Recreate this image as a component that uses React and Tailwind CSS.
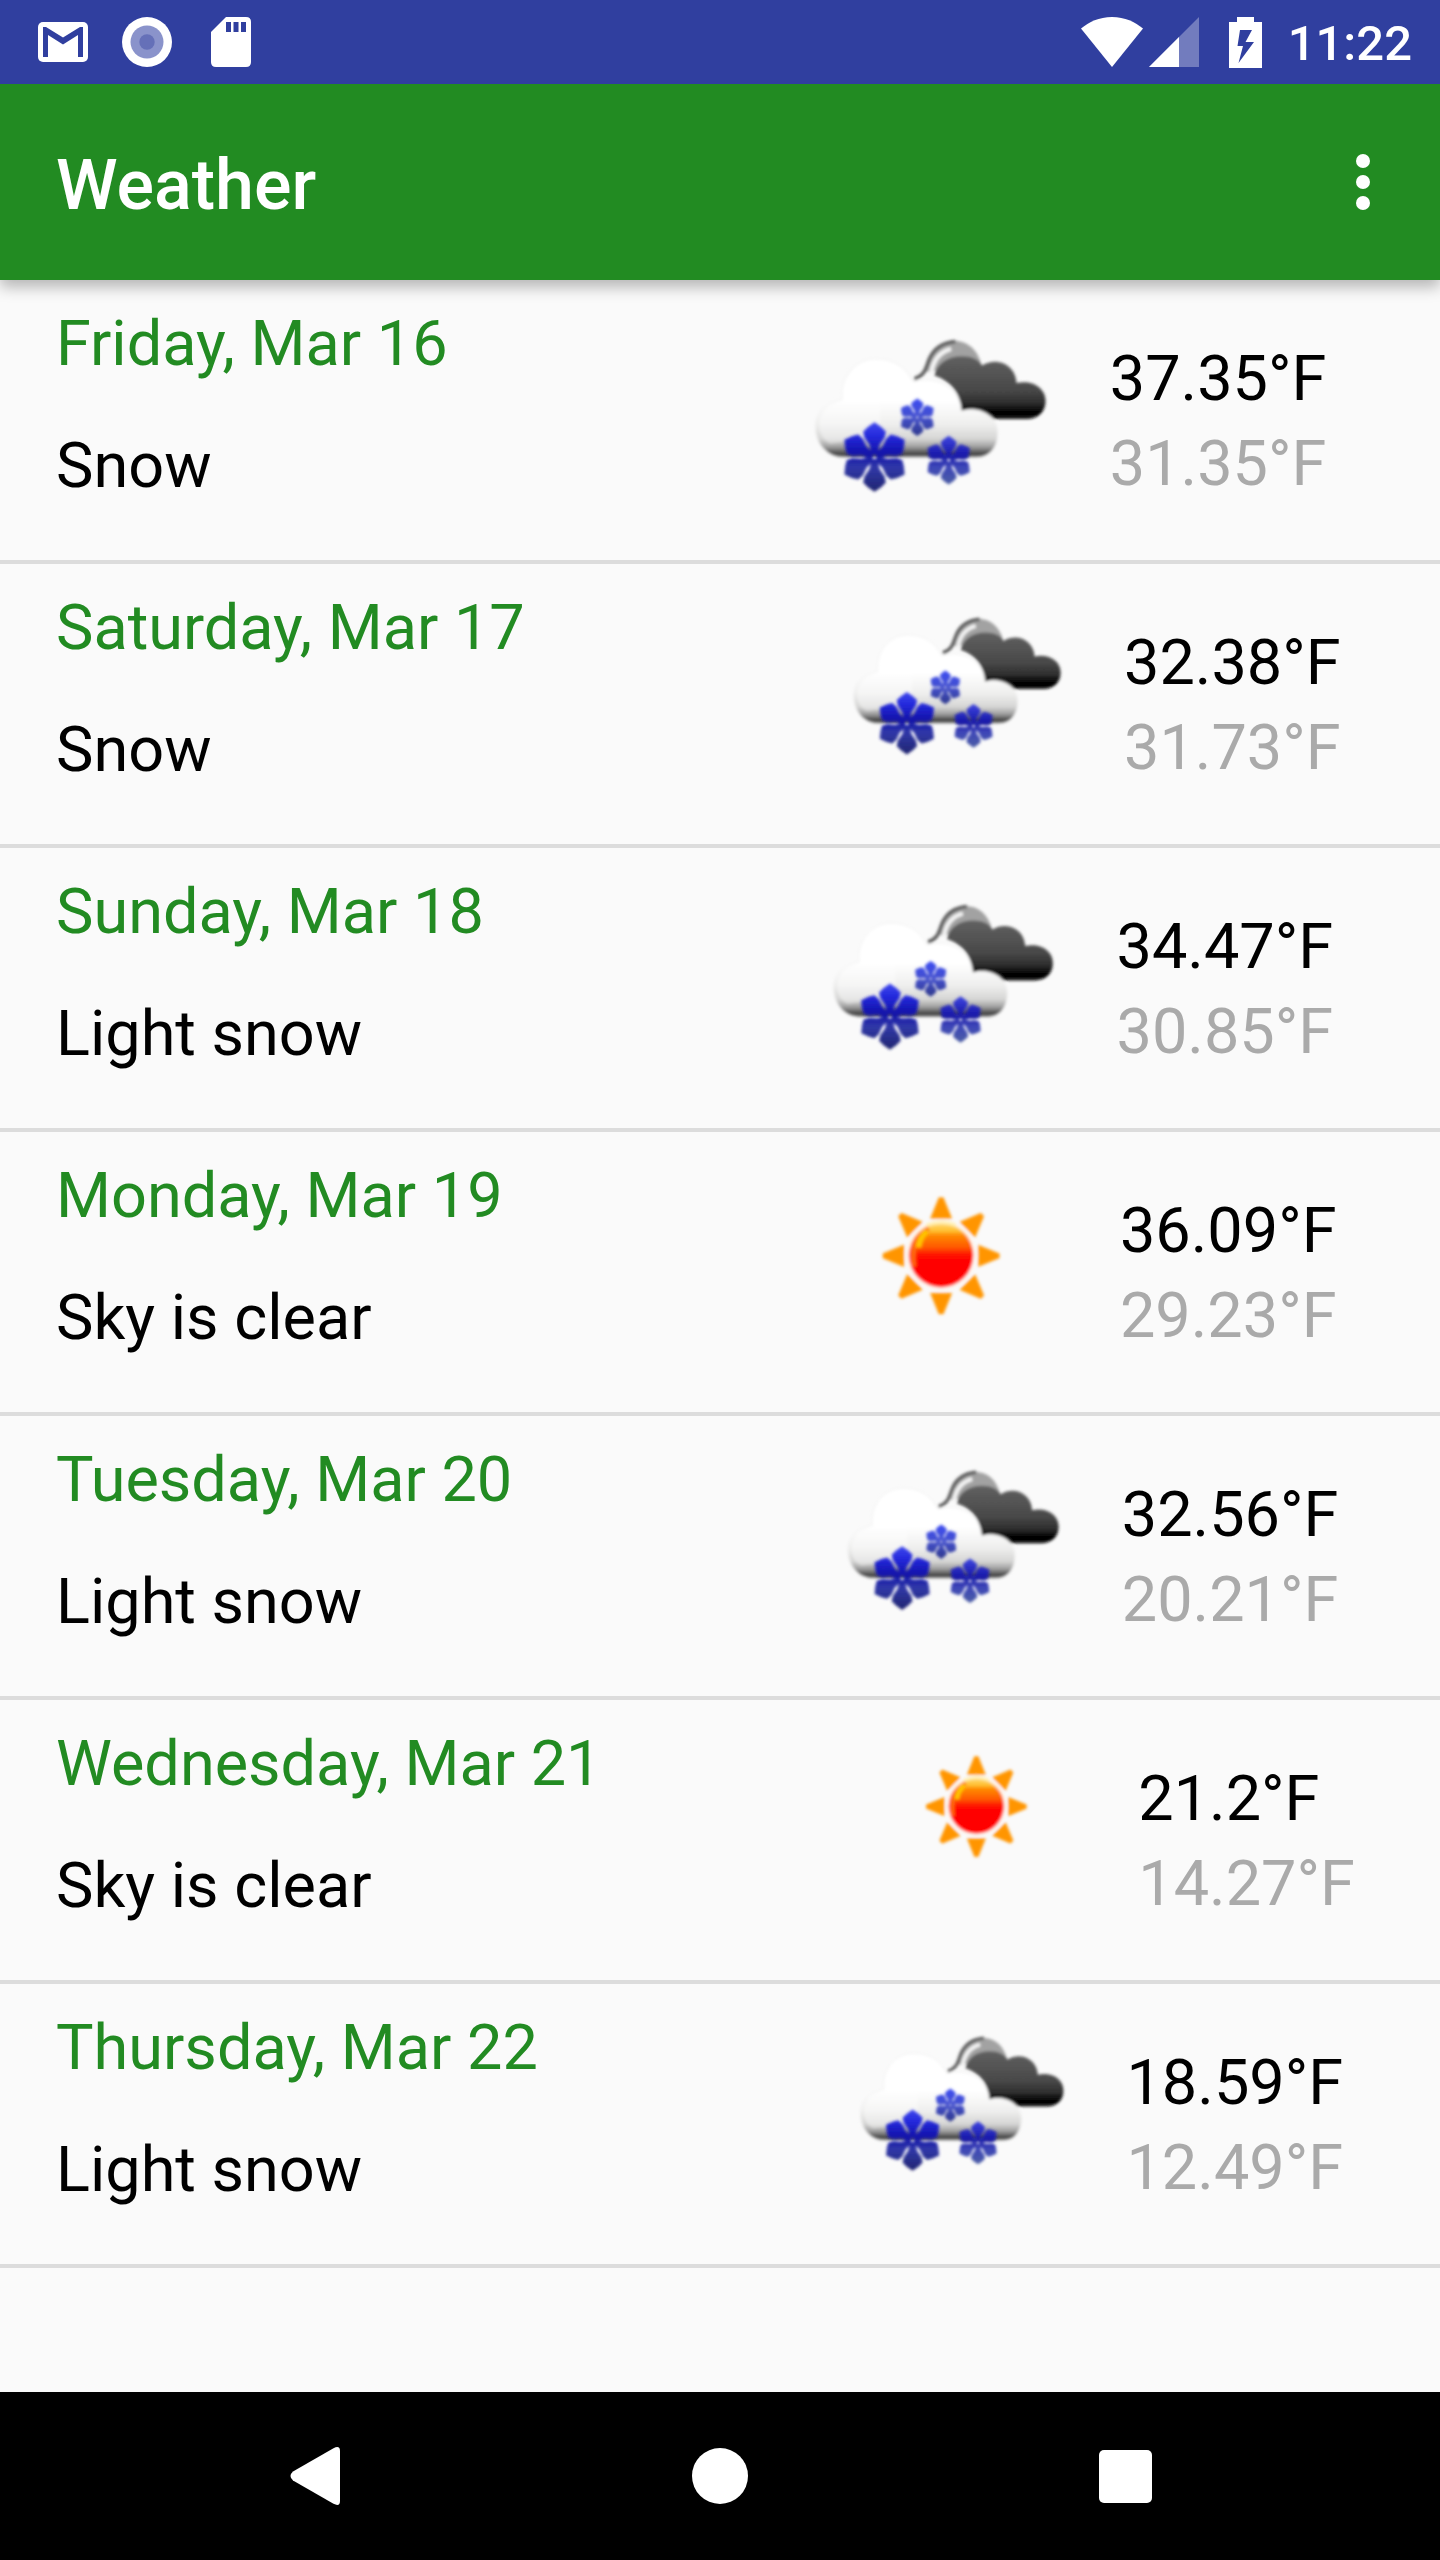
import React from "react";

const forecast = [
  { date: "Friday, Mar 16", text: "Snow", high: "37.35°F", low: "31.35°F", icon: "snow" },
  { date: "Saturday, Mar 17", text: "Snow", high: "32.38°F", low: "31.73°F", icon: "snow" },
  { date: "Sunday, Mar 18", text: "Light snow", high: "34.47°F", low: "30.85°F", icon: "snow" },
  { date: "Monday, Mar 19", text: "Sky is clear", high: "36.09°F", low: "29.23°F", icon: "sun" },
  { date: "Tuesday, Mar 20", text: "Light snow", high: "32.56°F", low: "20.21°F", icon: "snow" },
  { date: "Wednesday, Mar 21", text: "Sky is clear", high: "21.2°F", low: "14.27°F", icon: "sun" },
  { date: "Thursday, Mar 22", text: "Light snow", high: "18.59°F", low: "12.49°F", icon: "snow" },
];

// One arm of a snowflake, pointing up from the centre.
const ARM = [
  [-8, -6], [-15, -36], [-30, -58], [-34, -76], [-20, -90], [0, -104],
  [20, -90], [34, -76], [30, -58], [15, -36], [8, -6],
];

function flakePath(cx, cy, scale) {
  let d = "";
  for (let i = 0; i < 6; i++) {
    const a = (i * Math.PI) / 3;
    const pts = ARM.map(([x, y]) => {
      const px = cx + scale * (x * Math.cos(a) - y * Math.sin(a));
      const py = cy + scale * (x * Math.sin(a) + y * Math.cos(a));
      return px.toFixed(1) + " " + py.toFixed(1);
    });
    d += "M" + pts.join("L") + "Z";
  }
  return d;
}

function SnowIcon({ id }) {
  return (
    <svg viewBox="57 -90 762 762" className="block w-full" role="img" aria-label="Snow">
      <defs>
        <linearGradient id={id + "dark"} gradientUnits="userSpaceOnUse" x1="0" y1="130" x2="0" y2="330">
          <stop offset="0" stopColor="#626262" />
          <stop offset="0.55" stopColor="#484848" />
          <stop offset="0.75" stopColor="#2c2c2c" />
          <stop offset="0.88" stopColor="#000" />
          <stop offset="1" stopColor="#111" />
        </linearGradient>
        <linearGradient id={id + "white"} gradientUnits="userSpaceOnUse" x1="0" y1="145" x2="0" y2="445">
          <stop offset="0" stopColor="#fff" />
          <stop offset="0.42" stopColor="#fff" />
          <stop offset="0.65" stopColor="#efefee" />
          <stop offset="0.8" stopColor="#d6d6d5" />
          <stop offset="0.88" stopColor="#a0a0a0" />
          <stop offset="0.95" stopColor="#444" />
          <stop offset="1" stopColor="#777" />
        </linearGradient>
        <linearGradient id={id + "big"} gradientUnits="userSpaceOnUse" x1="0" y1="335" x2="0" y2="545">
          <stop offset="0" stopColor="#3f48ee" />
          <stop offset="0.2" stopColor="#2429dc" />
          <stop offset="0.45" stopColor="#1212a8" />
          <stop offset="0.65" stopColor="#3038a8" />
          <stop offset="1" stopColor="#20246e" />
        </linearGradient>
        <linearGradient id={id + "mid"} gradientUnits="userSpaceOnUse" x1="0" y1="378" x2="0" y2="520">
          <stop offset="0" stopColor="#3e45e0" />
          <stop offset="0.4" stopColor="#1818a8" />
          <stop offset="0.65" stopColor="#3d46b8" />
          <stop offset="1" stopColor="#4a5ca4" />
        </linearGradient>
        <linearGradient id={id + "small"} gradientUnits="userSpaceOnUse" x1="0" y1="268" x2="0" y2="376">
          <stop offset="0" stopColor="#3c4cf0" />
          <stop offset="0.5" stopColor="#4450cc" />
          <stop offset="1" stopColor="#2e388c" />
        </linearGradient>
        <filter id={id + "soft"} x="-5%" y="-5%" width="110%" height="110%">
          <feGaussianBlur stdDeviation="5" />
        </filter>
      </defs>
      <g filter={"url(#" + id + "soft)"}>
        <path
          d="M432 185C440 135 475 92 520 92C562 92 592 120 602 160L560 180L480 180Z"
          fill="#a2a2a2"
        />
        <path
          d="M462 196C470 160 500 138 545 138C575 138 595 148 605 166C650 138 706 165 708 218C755 208 795 232 795 272C795 304 772 326 738 326H640C606 298 570 290 541 302C544 262 520 215 462 196Z"
          fill={"url(#" + id + "dark)"}
        />
        <path d="M452 190C458 150 478 125 512 116" fill="none" stroke="#f4f4f4" strokeWidth="13" />
        <path d="M402 206C432 196 436 178 445 152C456 122 480 98 525 94" fill="none" stroke="#5c5c5c" strokeWidth="11" />
        <path
          d="M188 442C140 440 106 400 106 350C106 305 138 278 186 268C178 205 222 146 286 146C342 146 378 172 398 214C470 196 540 230 543 304C600 284 652 320 652 368C652 410 628 442 588 442Z"
          fill={"url(#" + id + "white)"}
          stroke="#f1f1f1"
          strokeWidth="3"
        />
        <path
          d="M118 345C118 305 145 285 196 275L300 260L300 380L150 400C130 390 118 370 118 345Z"
          fill="#fff"
          opacity="0.4"
        />
      </g>
      <g filter={"url(#" + id + "soft)"}>
        <path d={flakePath(283, 440, 1)} fill={"url(#" + id + "big)"} />
        <path d={flakePath(505, 449, 0.7)} fill={"url(#" + id + "mid)"} />
        <path d={flakePath(411, 321, 0.54)} fill={"url(#" + id + "small)"} />
      </g>
    </svg>
  );
}

function SunIcon({ id }) {
  return (
    <svg viewBox="-39 -84 708 708" className="block w-full" role="img" aria-label="Clear sky">
      <defs>
        <linearGradient id={id + "disc"} gradientUnits="userSpaceOnUse" x1="0" y1="185" x2="0" y2="385">
          <stop offset="0" stopColor="#ffdc78" />
          <stop offset="0.14" stopColor="#ffc030" />
          <stop offset="0.2" stopColor="#ff8a00" />
          <stop offset="0.38" stopColor="#ff5a00" />
          <stop offset="0.5" stopColor="#ff1000" />
          <stop offset="0.6" stopColor="#ff0000" />
          <stop offset="1" stopColor="#ff0000" />
        </linearGradient>
        <filter id={id + "soft"} x="-10%" y="-10%" width="120%" height="120%">
          <feGaussianBlur stdDeviation="5" />
        </filter>
      </defs>
      <g filter={"url(#" + id + "soft)"}>
        {[0, 45, 90, 135, 180, 225, 270, 315].map((a) => (
          <path key={a} d="M293 112H307L333 176H267Z" fill="#ff9500" transform={"rotate(" + a + " 300 287)"} />
        ))}
        <circle cx="300" cy="285" r="105" fill="#fff6ee" />
        <circle cx="300" cy="285" r="96" fill={"url(#" + id + "disc)"} />
        <path d="M218 320C210 270 225 225 262 205" fill="none" stroke="#ff6a10" strokeWidth="14" />
        <path d="M232 262C234 242 242 226 258 212" fill="none" stroke="#ffc400" strokeWidth="17" />
        <path d="M256 196C284 184 318 184 344 196" fill="none" stroke="#fff0b4" strokeWidth="10" />
      </g>
    </svg>
  );
}

function StatusBar() {
  return (
    <div className="flex h-[84px] items-center justify-between bg-[#303f9f] pr-7 pl-[38px] text-white">
      <div className="flex items-center">
        <svg viewBox="0 0 50 40" className="h-10 w-[50px]" role="img" aria-label="Mail">
          <rect width="50" height="40" rx="5" fill="#fff" />
          <path d="M5 35V5H8L25 15.500L42 5H45V35H40V13L25 22.500L10 13V35Z" fill="#303f9f" />
        </svg>
        <svg viewBox="0 0 50 50" className="ml-[34px] size-[50px]" role="img" aria-label="Sync">
          <circle cx="25" cy="25" r="25" fill="#fff" />
          <circle cx="25" cy="25" r="16.500" fill="#8a93cb" />
          <circle cx="25" cy="25" r="7.700" fill="#6570b8" />
        </svg>
        <svg viewBox="0 0 40 50" className="ml-[39px] h-[50px] w-10" role="img" aria-label="SD card">
          <path d="M15 0H35Q40 0 40 5V45Q40 50 35 50H5Q0 50 0 45V15Z" fill="#fff" />
          <path d="M15 5H20V15H15ZM22.500 5H27.500V15H22.500ZM30 5H35V15H30Z" fill="#303f9f" />
        </svg>
      </div>
      <div className="flex items-center">
        <svg viewBox="0 0 62 50" className="h-[50px] w-[62px]" role="img" aria-label="Wi-Fi">
          <path d="M31 50L0 11.500C8 5 18 0 31 0S54 5 62 11.500Z" fill="#fff" />
        </svg>
        <svg viewBox="0 0 50 50" className="ml-1.5 size-[50px]" role="img" aria-label="Signal">
          <path d="M0 50L50 0V50Z" fill="#fff" opacity="0.32" />
          <path d="M0 50L30 20V50Z" fill="#fff" />
        </svg>
        <svg viewBox="0 0 33 51" className="ml-[30px] h-[51px] w-[33px]" role="img" aria-label="Battery charging">
          <path d="M8 0H25V5H33V51H0V5H8Z" fill="#fff" />
          <path d="M11 13H23L16.500 25H25L9.500 46L14 29H8.500Z" fill="#303f9f" />
        </svg>
        <span className="ml-[26px] pt-1 text-[49px] leading-[58px] font-medium">11:22</span>
      </div>
    </div>
  );
}

function ForecastRow({ day, id }) {
  return (
    <li className="flex h-[284px] items-start gap-14 border-b-4 border-[#dcdcdc] pl-14 text-[63px] leading-[85px] whitespace-nowrap">
      <div className="flex flex-[13_0_auto] flex-col gap-[37px] pt-[21px]">
        <h2 className="text-[#228b22]">{day.date}</h2>
        <p className="text-black">{day.text}</p>
      </div>
      <div className="flex-[9_0_50px]">{day.icon === "snow" ? <SnowIcon id={id} /> : <SunIcon id={id} />}</div>
      <div className="flex-[5_0_auto] pt-14">
        <p className="text-black">{day.high}</p>
        <p className="text-[#aaaaaa]">{day.low}</p>
      </div>
    </li>
  );
}

export default function App() {
  return (
    <div className="flex min-h-screen flex-col bg-[#fafafa] font-['Roboto',sans-serif]">
      <header className="relative z-10 shadow-[0_7px_14px_rgba(0,0,0,0.28)]">
        <StatusBar />
        <div className="flex h-[196px] items-center justify-between bg-[#228b22] pr-[49px] pl-14 text-white">
          <h1 className="pt-1.5 text-[70px] leading-[82px] font-medium">Weather</h1>
          <button type="button" aria-label="More options" className="flex w-14 justify-center">
            <svg viewBox="0 0 14 56" className="h-14 w-3.5" fill="#fff">
              <circle cx="7" cy="7" r="7" />
              <circle cx="7" cy="28" r="7" />
              <circle cx="7" cy="49" r="7" />
            </svg>
          </button>
        </div>
      </header>
      <main className="grow">
        <ul>
          {forecast.map((day, i) => (
            <ForecastRow key={day.date} day={day} id={"w" + i} />
          ))}
        </ul>
      </main>
      <nav aria-label="System" className="grid h-[168px] grid-cols-3 bg-black px-28">
        <button type="button" aria-label="Back" className="flex items-center justify-center">
          <svg viewBox="0 0 50 58" className="h-[58px] w-[50px]" fill="#fff">
            <path d="M43.500 1.200Q50 -2 50 4V54Q50 60 43.500 56.800L3 33.500Q-2 29 3 24.500Z" />
          </svg>
        </button>
        <button type="button" aria-label="Home" className="flex items-center justify-center">
          <span className="size-14 rounded-full bg-white" />
        </button>
        <button type="button" aria-label="Recent apps" className="flex items-center justify-center">
          <span className="size-[53px] rounded-[5px] bg-white" />
        </button>
      </nav>
    </div>
  );
}
